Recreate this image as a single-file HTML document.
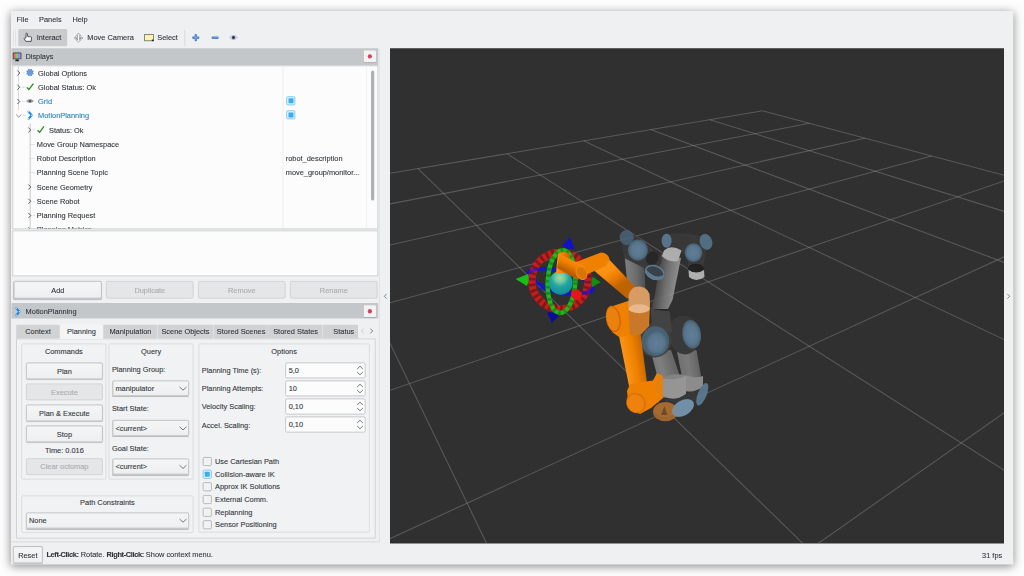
<!DOCTYPE html>
<html><head><meta charset="utf-8"><title>RViz</title>
<style>
html,body{margin:0;padding:0;}
html{width:1024PX;height:576PX;overflow:hidden;}
body{width:1024PX;height:576PX;overflow:hidden;background:#fdfdfd;font-family:"Liberation Sans",sans-serif;font-size:29.6px;color:#31363b;position:relative;}
.a{position:absolute;}
.win{left:44px;top:44px;width:4009.2px;height:2214.4px;background:#eff0f1;box-shadow:0 6px 36px 4px rgba(0,0,0,.45);}
.t,.row,.lab,.btn,.tab,.combo,.spin{-webkit-text-stroke:0.4px currentColor;}
.t{position:absolute;white-space:nowrap;line-height:40px;height:40px;}
.title{background:#c4c7ca;}
.btn{position:absolute;box-sizing:border-box;border:3.2px solid #b4b6b8;border-radius:6.4px;background:linear-gradient(#f4f5f5,#eeeff0);box-shadow:0 2.4px 3.2px rgba(0,0,0,.22);text-align:center;white-space:nowrap;}
.btn.dis{background:#e5e6e7;color:#a9acae;box-shadow:none;border-color:#c9cbcd;}
.frame{position:absolute;box-sizing:border-box;border:3.2px solid #c0c2c4;background:#fcfcfc;}
.grp{position:absolute;box-sizing:border-box;border:3.2px solid #d4d6d7;border-radius:6px;background:#f1f2f3;}
.cb{position:absolute;box-sizing:border-box;width:36px;height:36px;border:3.2px solid #a4a7a9;border-radius:6px;background:#f1f2f3;}
.cb.on{border:3.2px solid #6cc0ee;background:#dff0fb;}
.cb.on::after{content:"";position:absolute;left:5.2px;top:5.2px;width:20px;height:20px;background:#3daee9;border-radius:1.6px;}
.blue{color:#2980b9;}
.row{position:absolute;left:0;height:57px;line-height:57px;white-space:nowrap;}
svg{position:absolute;overflow:visible;}
.tab{position:absolute;box-sizing:border-box;top:1297.6px;height:56px;line-height:54.4px;background:#d0d2d4;border:2.8px solid #c0c2c4;border-bottom:none;text-align:center;white-space:nowrap;border-radius:6px 6px 0 0;}
.tab.act{top:1293.6px;height:62.4px;line-height:60.8px;background:#f3f4f4;z-index:2;}
.lab{position:absolute;white-space:nowrap;line-height:40px;}
.combo{position:absolute;box-sizing:border-box;border:3.2px solid #b4b6b8;border-radius:6.4px;background:linear-gradient(#f4f5f5,#eeeff0);box-shadow:0 2.4px 3.2px rgba(0,0,0,.22);white-space:nowrap;padding-left:8.8px;}
.spin{position:absolute;box-sizing:border-box;border:3.2px solid #b8babc;border-radius:6.4px;background:#fcfcfc;white-space:nowrap;padding-left:10.4px;}
b{letter-spacing:-1.44px;}
#s{position:absolute;left:0;top:0;width:4096PX;height:2304PX;transform:scale(0.25);transform-origin:0 0;}
</style></head><body><div id="s">
<div class="a win"></div>

<!-- menu bar -->
<div class="t" style="left:66.4px;top:58px;">File</div>
<div class="t" style="left:156px;top:58px;">Panels</div>
<div class="t" style="left:289.6px;top:58px;">Help</div>

<!-- toolbar -->
<div class="a" style="left:53.6px;top:118px;width:2.4px;height:66px;background:#d2d4d6;"></div>
<div class="a" style="left:61.6px;top:118px;width:2.4px;height:66px;background:#d2d4d6;"></div>
<div class="a" style="left:73.2px;top:116px;width:196px;height:69.2px;background:#c9cbcd;border-radius:6.4px;"></div>
<svg style="left:91.2px;top:128.8px;" width="42.4" height="42.4" viewBox="0 0 10 10"><path d="M3.1 5.2V1.5c0-.9 1.3-.9 1.3 0v2.3l3 .5c.7.1 1 .5.9 1.1L8 8.6H2.9L1.4 6.3c-.4-.7.4-1.2.9-.7z" fill="#fcfcfc" stroke="#2c3136" stroke-width=".75" stroke-linejoin="round"/></svg>
<div class="t" style="left:146.8px;top:130.8px;">Interact</div>
<svg style="left:294px;top:130px;" width="40" height="40" viewBox="0 0 10 10"><g fill="#f6f6f6" stroke="#54585d" stroke-width=".6" stroke-dasharray="1.1 .35"><path d="M5 .5L7.200 3H6v2.200h1.500V4.200L9.500 5.500 7.500 6.800V6H6v1.500h1.200L5 9.600 2.800 7.500H4V6H2.500v.8L.5 5.500 2.500 4.200v1H4V3H2.800z"/></g></svg>
<div class="t" style="left:349.2px;top:130.8px;">Move Camera</div>
<svg style="left:577.2px;top:136px;" width="40" height="32" viewBox="0 0 10 8"><rect x=".4" y=".4" width="8.8" height="6.4" fill="#fdf6a8" stroke="#555a5e" stroke-width=".7"/><rect x="7.6" y="5.6" width="1.8" height="1.6" fill="#222"/></svg>
<div class="t" style="left:629.2px;top:130.8px;">Select</div>
<div class="a" style="left:738.4px;top:120px;width:2.4px;height:64px;background:#cfd1d3;"></div>
<svg style="left:769.2px;top:136.8px;" width="28" height="28" viewBox="0 0 7 7"><path d="M3.5 1v5M1 3.500h5" stroke="#3f78c4" stroke-width="2.300" fill="none" stroke-linecap="round"/><path d="M3.5 1.300v4.400M1.300 3.500h4.400" stroke="#8fb4e4" stroke-width=".8" fill="none" stroke-linecap="round"/></svg>
<svg style="left:845.6px;top:144.8px;" width="28" height="12" viewBox="0 0 7 3"><path d="M1.200 1.500h4.800" stroke="#3f78c4" stroke-width="2.300" fill="none" stroke-linecap="round"/><path d="M1.400 1.500h4.400" stroke="#8fb4e4" stroke-width=".8" fill="none" stroke-linecap="round"/></svg>
<svg style="left:918.4px;top:138px;" width="32" height="24" viewBox="0 0 8 6"><path d="M.3 3C2 .4 6 .4 7.700 3 6 5.600 2 5.600 .3 3z" fill="#e4e5e7" stroke="#9a9da0" stroke-width=".6"/><circle cx="4" cy="3" r="1.700" fill="#3a4a90"/><circle cx="4" cy="3" r=".7" fill="#141c40"/></svg>

<!-- Displays dock -->
<div class="a title" style="left:45.6px;top:192.8px;width:1467.2px;height:68.8px;"></div>
<svg style="left:50.4px;top:208.8px;" width="36" height="36" viewBox="0 0 9 9"><rect x=".3" y=".3" width="8.600" height="6.800" rx=".7" fill="#3c3c3c" /><rect x="1.100" y="1.100" width="2.400" height="5.200" fill="#dc7474"/><rect x="3.400" y="1.100" width="2.400" height="5.200" fill="#78c878"/><rect x="5.700" y="1.100" width="2.400" height="5.200" fill="#9a96e6"/><path d="M3.400 7.100h2.400l.9 1.900h-4.200z" fill="#2a2a2a"/></svg>
<div class="t" style="left:101.6px;top:206.4px;">Displays</div>
<div class="a" style="left:1455.2px;top:201.6px;width:48.8px;height:47.2px;background:#f2f3f3;border-radius:4px;box-shadow:0 2px 2.4px rgba(0,0,0,.25);"></div>
<div class="a" style="left:1470.8px;top:216.8px;width:17.6px;height:17.6px;border-radius:50%;background:#e0405e;"></div>

<div class="frame" style="left:50.4px;top:261.6px;width:1462.4px;height:655.2px;overflow:hidden;" id="tree">
  <!-- branch lines -->
  <div class="a" style="left:18.4px;top:0;width:2.4px;height:176px;background:#b8babc;"></div>
  <div class="a" style="left:66px;top:229.6px;width:2.4px;height:440px;background:#b8babc;"></div>
  <!-- column / scrollbar -->
  <div class="a" style="left:1077.6px;top:0;width:2.4px;height:680px;background:#dcdddf;"></div>
  <div class="a" style="left:1410.4px;top:0;width:2.4px;height:680px;background:#e6e7e8;"></div>
  <div class="a" style="left:1430.8px;top:17.6px;width:13.2px;height:520px;background:#aeb1b3;border-radius:6.8px;"></div>
  <div class="a" style="left:33.2px;top:26px;width:12px;height:2.4px;background:#c9cbcd;"></div><svg style="left:12.8px;top:15.2px;" width="16" height="24" viewBox="0 0 4 6"><path d="M.9.5L3.300 3 .9 5.500" fill="none" stroke="#3a3f44" stroke-width=".8"/></svg><svg style="left:48.4px;top:7.2px;" width="36" height="36" viewBox="-4.5 -4.5 9 9"><circle r="3" fill="#5a8cd8"/><g stroke="#5a8cd8" stroke-width="1.300"><line x1="0" y1="0" x2="3.42" y2="1.42"/><line x1="0" y1="0" x2="1.42" y2="3.42"/><line x1="0" y1="0" x2="-1.42" y2="3.42"/><line x1="0" y1="0" x2="-3.42" y2="1.42"/><line x1="0" y1="0" x2="-3.42" y2="-1.42"/><line x1="0" y1="0" x2="-1.42" y2="-3.42"/><line x1="0" y1="0" x2="1.42" y2="-3.42"/><line x1="0" y1="0" x2="3.42" y2="-1.42"/></g><circle r="2" fill="none" stroke="#8fb2e8" stroke-width=".6"/><circle r=".8" fill="#7ea6e4"/></svg><div class="row " style="left:98.8px;top:-1.32px;">Global Options</div>
<div class="a" style="left:33.2px;top:82.8px;width:12px;height:2.4px;background:#c9cbcd;"></div><svg style="left:12.8px;top:72px;" width="16" height="24" viewBox="0 0 4 6"><path d="M.9.5L3.300 3 .9 5.500" fill="none" stroke="#3a3f44" stroke-width=".8"/></svg><svg style="left:50.4px;top:66px;" width="32" height="32" viewBox="0 0 8 8"><path d="M.8 4.600L2.900 6.800 7.300 .9" fill="none" stroke="#1f8a1f" stroke-width="1.25"/></svg><div class="row " style="left:98.8px;top:55.68px;">Global Status: Ok</div>
<div class="a" style="left:33.2px;top:140px;width:12px;height:2.4px;background:#c9cbcd;"></div><svg style="left:12.8px;top:129.2px;" width="16" height="24" viewBox="0 0 4 6"><path d="M.9.5L3.300 3 .9 5.500" fill="none" stroke="#3a3f44" stroke-width=".8"/></svg><svg style="left:50.4px;top:127.2px;" width="32" height="24" viewBox="0 0 8 6"><path d="M.2 3C2 .5 6 .5 7.800 3 6 5.500 2 5.500 .2 3z" fill="#9a9da0"/><circle cx="4" cy="3" r="1.200" fill="#55585b"/></svg><div class="row blue" style="left:98.8px;top:112.68px;">Grid</div><div class="cb on" style="left:1092px;top:120px;"></div>
<div class="a" style="left:37.2px;top:196.8px;width:10px;height:2.4px;background:#c9cbcd;"></div><svg style="left:9.6px;top:190px;" width="24" height="16" viewBox="0 0 6 4"><path d="M.5.9L3 3.300 5.500 .9" fill="none" stroke="#4d5257" stroke-width=".65"/></svg><svg style="left:53.6px;top:176px;" width="28" height="40" viewBox="0 0 7 10"><path d="M1.800 1.500L5 5 1.800 8.500" fill="none" stroke="#1e8ae6" stroke-width="2" stroke-linecap="round" stroke-linejoin="round"/><circle cx="1.800" cy="1.500" r=".75" fill="#cfe8fc"/><circle cx="5" cy="5" r=".75" fill="#cfe8fc"/><circle cx="1.800" cy="8.500" r=".75" fill="#cfe8fc"/></svg><div class="row blue" style="left:98.8px;top:169.68px;">MotionPlanning</div><div class="cb on" style="left:1092px;top:176.8px;"></div>
<div class="a" style="left:77.2px;top:254px;width:10px;height:2.4px;background:#c9cbcd;"></div><svg style="left:56.4px;top:243.2px;" width="16" height="24" viewBox="0 0 4 6"><path d="M.9.5L3.300 3 .9 5.500" fill="none" stroke="#3a3f44" stroke-width=".8"/></svg><svg style="left:93.2px;top:237.2px;" width="32" height="32" viewBox="0 0 8 8"><path d="M.8 4.600L2.900 6.800 7.300 .9" fill="none" stroke="#1f8a1f" stroke-width="1.25"/></svg><div class="row " style="left:142.4px;top:226.72px;">Status: Ok</div>
<div class="a" style="left:64.8px;top:311.2px;width:20.4px;height:2.4px;background:#c9cbcd;"></div><div class="row " style="left:94px;top:283.72px;">Move Group Namespace</div>
<div class="a" style="left:64.8px;top:368px;width:20.4px;height:2.4px;background:#c9cbcd;"></div><div class="row " style="left:94px;top:340.72px;">Robot Description</div><div class="row " style="left:1089.6px;top:340.72px;">robot_description</div>
<div class="a" style="left:64.8px;top:425.2px;width:20.4px;height:2.4px;background:#c9cbcd;"></div><div class="row " style="left:94px;top:397.72px;">Planning Scene Topic</div><div class="row " style="left:1089.6px;top:397.72px;">move_group/monitor...</div>
<div class="a" style="left:77.2px;top:482px;width:10px;height:2.4px;background:#c9cbcd;"></div><svg style="left:56.4px;top:471.2px;" width="16" height="24" viewBox="0 0 4 6"><path d="M.9.5L3.300 3 .9 5.500" fill="none" stroke="#3a3f44" stroke-width=".8"/></svg><div class="row " style="left:94px;top:454.72px;">Scene Geometry</div>
<div class="a" style="left:77.2px;top:539.2px;width:10px;height:2.4px;background:#c9cbcd;"></div><svg style="left:56.4px;top:528.4px;" width="16" height="24" viewBox="0 0 4 6"><path d="M.9.5L3.300 3 .9 5.500" fill="none" stroke="#3a3f44" stroke-width=".8"/></svg><div class="row " style="left:94px;top:511.72px;">Scene Robot</div>
<div class="a" style="left:77.2px;top:596px;width:10px;height:2.4px;background:#c9cbcd;"></div><svg style="left:56.4px;top:585.2px;" width="16" height="24" viewBox="0 0 4 6"><path d="M.9.5L3.300 3 .9 5.500" fill="none" stroke="#3a3f44" stroke-width=".8"/></svg><div class="row " style="left:94px;top:568.72px;">Planning Request</div>
<div class="a" style="left:77.2px;top:652.8px;width:10px;height:2.4px;background:#c9cbcd;"></div><svg style="left:56.4px;top:642.4px;" width="16" height="24" viewBox="0 0 4 6"><path d="M.9.5L3.300 3 .9 5.500" fill="none" stroke="#3a3f44" stroke-width=".8"/></svg><div class="row " style="left:94px;top:625.72px;">Planning Metrics</div>
</div>
<div class="frame" style="left:50.4px;top:921.6px;width:1462.4px;height:183.2px;"></div>

<div class="btn" style="left:55.2px;top:1124px;width:352px;height:70.4px;line-height:70.4px;">Add</div>
<div class="btn dis" style="left:424px;top:1124px;width:350.4px;height:70.4px;line-height:70.4px;">Duplicate</div>
<div class="btn dis" style="left:792px;top:1124px;width:350.4px;height:70.4px;line-height:70.4px;">Remove</div>
<div class="btn dis" style="left:1160px;top:1124px;width:350.4px;height:70.4px;line-height:70.4px;">Rename</div>

<!-- MotionPlanning dock -->
<div class="a title" style="left:45.6px;top:1211.6px;width:1467.2px;height:62.4px;"></div>
<svg style="left:58.4px;top:1227.2px;" width="28" height="40" viewBox="0 0 7 10"><path d="M1.800 1.500L5 5 1.800 8.500" fill="none" stroke="#1e8ae6" stroke-width="2" stroke-linecap="round" stroke-linejoin="round"/><circle cx="1.800" cy="1.500" r=".75" fill="#cfe8fc"/><circle cx="5" cy="5" r=".75" fill="#cfe8fc"/><circle cx="1.800" cy="8.500" r=".75" fill="#cfe8fc"/></svg>
<div class="t" style="left:102.4px;top:1224px;">MotionPlanning</div>
<div class="a" style="left:1455.2px;top:1220.8px;width:48.8px;height:47.2px;background:#f2f3f3;border-radius:4px;box-shadow:0 2px 2.4px rgba(0,0,0,.25);"></div>
<div class="a" style="left:1470.8px;top:1236px;width:17.6px;height:17.6px;border-radius:50%;background:#e0405e;"></div>

<!-- tabs -->
<div class="tab" style="left:64.8px;width:174.4px;">Context</div>
<div class="tab act" style="left:238.4px;width:175.2px;">Planning</div>
<div class="tab" style="left:412.8px;width:217.6px;">Manipulation</div>
<div class="tab" style="left:629.6px;width:224.8px;">Scene Objects</div>
<div class="tab" style="left:853.6px;width:221.6px;">Stored Scenes</div>
<div class="tab" style="left:1074.4px;width:216px;">Stored States</div>
<div class="tab" style="left:1289.6px;width:143.2px;padding-left:28px;">Status</div>
<svg style="left:1442.4px;top:1312px;" width="16" height="24" viewBox="0 0 4 6"><path d="M3.2.6L.8 3l2.400 2.400" fill="none" stroke="#b4b7b9" stroke-width=".7"/></svg>
<svg style="left:1477.6px;top:1312px;" width="16" height="24" viewBox="0 0 4 6"><path d="M.8.6L3.200 3 .8 5.400" fill="none" stroke="#4a4f54" stroke-width=".7"/></svg>
<div class="a" style="left:64.8px;top:1353.6px;width:1437.6px;height:800px;box-sizing:border-box;border:3.2px solid #c6c8ca;background:#f1f2f3;"></div>

<!-- Commands -->
<div class="grp" style="left:85.2px;top:1374.4px;width:340px;height:543.2px;"></div>
<div class="lab" style="left:85.2px;width:340px;top:1384.4px;text-align:center;">Commands</div>
<div class="btn" style="left:104px;top:1449.6px;width:307.2px;height:67.2px;line-height:62.8px;">Plan</div>
<div class="btn dis" style="left:104px;top:1533.6px;width:307.2px;height:67.2px;line-height:62.8px;">Execute</div>
<div class="btn" style="left:104px;top:1617.6px;width:307.2px;height:67.2px;line-height:62.8px;">Plan &amp; Execute</div>
<div class="btn" style="left:104px;top:1701.6px;width:307.2px;height:67.2px;line-height:62.8px;">Stop</div>
<div class="lab" style="left:104px;width:307.2px;top:1780.8px;text-align:center;">Time: 0.016</div>
<div class="btn dis" style="left:104px;top:1832.8px;width:307.2px;height:67.2px;line-height:62.8px;">Clear octomap</div>

<!-- Query -->
<div class="grp" style="left:434.4px;top:1374.4px;width:340px;height:543.2px;"></div>
<div class="lab" style="left:434.4px;width:340px;top:1384.4px;text-align:center;">Query</div>
<div class="lab" style="left:447.6px;top:1459.2px;">Planning Group:</div>
<div class="combo" style="left:450px;top:1522.4px;width:306.4px;height:61.2px;line-height:58.4px;">manipulator</div>
<div class="lab" style="left:447.6px;top:1615.2px;">Start State:</div>
<div class="combo" style="left:450px;top:1680px;width:306.4px;height:63.6px;line-height:60.8px;">&lt;current&gt;</div>
<div class="lab" style="left:447.6px;top:1772.8px;">Goal State:</div>
<div class="combo" style="left:450px;top:1834.4px;width:306.4px;height:63.6px;line-height:60.8px;">&lt;current&gt;</div>

<!-- Path Constraints -->
<div class="grp" style="left:85.2px;top:1981.6px;width:689.2px;height:150.4px;"></div>
<div class="lab" style="left:85.2px;width:689.2px;top:1990.8px;text-align:center;">Path Constraints</div>
<div class="combo" style="left:104px;top:2050.4px;width:652px;height:63.2px;line-height:59.2px;">None</div>

<!-- Options -->
<div class="grp" style="left:793.6px;top:1374.4px;width:685.6px;height:756px;"></div>
<div class="lab" style="left:793.6px;width:685.6px;top:1386.4px;text-align:center;">Options</div>
<div class="lab" style="left:806.8px;top:1463.2px;">Planning Time (s):</div>
<div class="lab" style="left:806.8px;top:1535.2px;">Planning Attempts:</div>
<div class="lab" style="left:806.8px;top:1607.2px;">Velocity Scaling:</div>
<div class="lab" style="left:806.8px;top:1679.6px;">Accel. Scaling:</div>
<div class="spin" style="left:1141.2px;top:1450px;width:320.8px;height:63.2px;line-height:59.2px;">5,0</div>
<div class="spin" style="left:1141.2px;top:1522px;width:320.8px;height:63.2px;line-height:59.2px;">10</div>
<div class="spin" style="left:1141.2px;top:1594.4px;width:320.8px;height:63.2px;line-height:59.2px;">0,10</div>
<div class="spin" style="left:1141.2px;top:1666.4px;width:320.8px;height:63.2px;line-height:59.2px;">0,10</div>
<svg style="left:1425.6px;top:1459.6px;" width="28" height="44" viewBox="0 0 7 11"><path d="M.6 4L3.500 1.200 6.400 4M.6 7L3.500 9.800 6.400 7" fill="none" stroke="#3f4449" stroke-width=".7"/></svg>
<svg style="left:1425.6px;top:1531.6px;" width="28" height="44" viewBox="0 0 7 11"><path d="M.6 4L3.500 1.200 6.400 4M.6 7L3.500 9.800 6.400 7" fill="none" stroke="#3f4449" stroke-width=".7"/></svg>
<svg style="left:1425.6px;top:1604px;" width="28" height="44" viewBox="0 0 7 11"><path d="M.6 4L3.500 1.200 6.400 4M.6 7L3.500 9.800 6.400 7" fill="none" stroke="#3f4449" stroke-width=".7"/></svg>
<svg style="left:1425.6px;top:1676px;" width="28" height="44" viewBox="0 0 7 11"><path d="M.6 4L3.500 1.200 6.400 4M.6 7L3.500 9.800 6.400 7" fill="none" stroke="#3f4449" stroke-width=".7"/></svg>
<svg style="left:716px;top:1544px;" width="32" height="20" viewBox="0 0 8 5"><path d="M.6 1L4 4.200 7.400 1" fill="none" stroke="#3f4449" stroke-width=".7"/></svg>
<svg style="left:716px;top:1702.8px;" width="32" height="20" viewBox="0 0 8 5"><path d="M.6 1L4 4.200 7.400 1" fill="none" stroke="#3f4449" stroke-width=".7"/></svg>
<svg style="left:716px;top:1857.2px;" width="32" height="20" viewBox="0 0 8 5"><path d="M.6 1L4 4.200 7.400 1" fill="none" stroke="#3f4449" stroke-width=".7"/></svg>
<svg style="left:716px;top:2072px;" width="32" height="20" viewBox="0 0 8 5"><path d="M.6 1L4 4.200 7.400 1" fill="none" stroke="#3f4449" stroke-width=".7"/></svg>
<div class="cb" style="left:810.8px;top:1828.4px;"></div><div class="lab" style="left:860px;top:1826.8px;">Use Cartesian Path</div>
<div class="cb on" style="left:810.8px;top:1879.2px;"></div><div class="lab" style="left:860px;top:1876.8px;">Collision-aware IK</div>
<div class="cb" style="left:810.8px;top:1929.2px;"></div><div class="lab" style="left:860px;top:1925.6px;">Approx IK Solutions</div>
<div class="cb" style="left:810.8px;top:1980px;"></div><div class="lab" style="left:860px;top:1978.4px;">External Comm.</div>
<div class="cb" style="left:810.8px;top:2030.8px;"></div><div class="lab" style="left:860px;top:2029.2px;">Replanning</div>
<div class="cb" style="left:810.8px;top:2080.8px;"></div><div class="lab" style="left:860px;top:2079.2px;">Sensor Positioning</div>

<div class="a" style="left:45.6px;top:2166.4px;width:1472px;height:2.4px;background:#cdcfd1;"></div>
<div class="a" style="left:1516px;top:194.4px;width:2.4px;height:1974.4px;background:#d5d7d9;"></div>

<!-- splitter arrows -->
<svg style="left:1533.6px;top:1172.8px;" width="16" height="24" viewBox="0 0 4 6"><path d="M3.2.6L.8 3l2.400 2.400" fill="none" stroke="#55595e" stroke-width=".7"/></svg>
<svg style="left:4025.6px;top:1172.8px;" width="16" height="24" viewBox="0 0 4 6"><path d="M.8.6L3.200 3 .8 5.400" fill="none" stroke="#55595e" stroke-width=".7"/></svg>

<!-- status bar -->
<div class="btn" style="left:51.6px;top:2184.8px;width:119.2px;height:68px;line-height:64px;">Reset</div>
<div class="t" style="left:185.6px;top:2198px;"><b>Left-Click:</b> Rotate. <b>Right-Click:</b> Show context menu.</div>
<div class="t" style="left:3800px;width:208.8px;text-align:right;top:2200px;">31 fps</div>

<!-- 3D view -->
<div class="a" style="left:1560px;top:193.2px;width:2456px;height:1980.4px;background:#303030;overflow:hidden;">
<svg style="left:0;top:0;" width="2456" height="1980.4" viewBox="0 0 614 495.1">
<g stroke="#a0a0a4" stroke-opacity=".37" stroke-width="1.05" fill="none">
<line x1="372.3" y1="62.6" x2="-5.0" y2="125.9"/>
<line x1="372.3" y1="62.6" x2="619.0" y2="128.4"/>
<line x1="419.2" y1="75.1" x2="-5.0" y2="156.6"/>
<line x1="319.8" y1="71.4" x2="619.0" y2="164.7"/>
<line x1="474.7" y1="89.9" x2="-5.0" y2="197.8"/>
<line x1="260.7" y1="81.3" x2="619.0" y2="216.0"/>
<line x1="541.6" y1="107.7" x2="-5.0" y2="255.8"/>
<line x1="193.6" y1="92.6" x2="619.0" y2="293.6"/>
<line x1="619.0" y1="131.1" x2="-5.0" y2="343.7"/>
<line x1="116.8" y1="105.4" x2="619.0" y2="425.1"/>
<line x1="619.0" y1="206.3" x2="-5.0" y2="492.6"/>
<line x1="28.0" y1="120.3" x2="417.9" y2="500.1"/>
<line x1="619.0" y1="361.2" x2="421.2" y2="500.1"/>
<line x1="-5.0" y1="284.6" x2="98.9" y2="500.1"/>
</g>
<defs>
<linearGradient id="og" gradientUnits="userSpaceOnUse" x1="609" y1="270" x2="620" y2="286"><stop offset="0" stop-color="#fb9214"/><stop offset=".4" stop-color="#f08000"/><stop offset="1" stop-color="#bf6200"/></linearGradient>
<linearGradient id="ogv" gradientUnits="userSpaceOnUse" x1="624" y1="360" x2="645" y2="356"><stop offset="0" stop-color="#fb9416"/><stop offset=".5" stop-color="#f08000"/><stop offset="1" stop-color="#c46500"/></linearGradient>
<linearGradient id="ogw" gradientUnits="userSpaceOnUse" x1="556" y1="260" x2="570" y2="260"><stop offset="0" stop-color="#fb9416"/><stop offset=".5" stop-color="#f08000"/><stop offset="1" stop-color="#c46500"/></linearGradient>
<linearGradient id="ogh" gradientUnits="userSpaceOnUse" x1="575" y1="258" x2="568" y2="272"><stop offset="0" stop-color="#fb9416"/><stop offset=".5" stop-color="#f08000"/><stop offset="1" stop-color="#b85e00"/></linearGradient>
<linearGradient id="gtA" gradientUnits="userSpaceOnUse" x1="625" y1="275" x2="645" y2="275"><stop offset="0" stop-color="#8d8d8d"/><stop offset=".5" stop-color="#7a7a7a"/><stop offset="1" stop-color="#565656"/></linearGradient>
<linearGradient id="gtB" gradientUnits="userSpaceOnUse" x1="657" y1="275" x2="677" y2="278"><stop offset="0" stop-color="#4a4a4a"/><stop offset=".5" stop-color="#7a7a7a"/><stop offset="1" stop-color="#9c9c9c"/></linearGradient>
<linearGradient id="gtC" gradientUnits="userSpaceOnUse" x1="652" y1="375" x2="674" y2="368"><stop offset="0" stop-color="#808080"/><stop offset=".5" stop-color="#8c8c8c"/><stop offset="1" stop-color="#727272"/></linearGradient>
<linearGradient id="gtD" gradientUnits="userSpaceOnUse" x1="678" y1="372" x2="700" y2="368"><stop offset="0" stop-color="#787878"/><stop offset=".5" stop-color="#868686"/><stop offset="1" stop-color="#6c6c6c"/></linearGradient>
<radialGradient id="sph" cx=".47" cy=".28" r=".75"><stop offset="0" stop-color="#a6dc9a"/><stop offset=".28" stop-color="#6cc6a0"/><stop offset=".5" stop-color="#22a4a4"/><stop offset="1" stop-color="#0d8a94"/></radialGradient>
<radialGradient id="bc" cx=".5" cy=".5" r=".5"><stop offset="0" stop-color="#6a8ca8"/><stop offset=".7" stop-color="#5f819c"/><stop offset="1" stop-color="#4a667c"/></radialGradient>
</defs>
<g transform="translate(-390,-48.3)">
<!-- ===== grey transparent robots ===== -->
<g opacity=".86">
 <!-- lower tubes -->
 <path d="M651 352 L671 350 L685.500 393 L663 398z" fill="url(#gtC)"/>
 <path d="M677 352 L696.500 350 L703 388 L685 392z" fill="url(#gtD)"/>
 <path d="M662.300 378 Q674 381 686 375.500 L686 394 Q674 403 662.300 395.500z" fill="#a6a6a6"/>
 <path d="M662.300 378 Q674 381 686 375.500 Q674 372 662.300 378z" fill="#929292"/>
 <path d="M686 375 Q695 379 703 376 L703 387 Q694 394 686 390.500z" fill="#9c9c9c"/>
 <!-- shoulder dark body -->
 <ellipse cx="684" cy="335" rx="15.500" ry="19.500" fill="#3b3b3b" transform="rotate(-8 684 335)"/>
 <ellipse cx="655" cy="340" rx="16.500" ry="17.500" fill="#434343"/>
 <path d="M650.500 308 Q660 312 669.500 310.500 L672 332 L653 334z" fill="#474747"/>
 <path d="M650.500 308 Q660 312 669.500 310.500 L669.300 307 Q660 309 650.800 305z" fill="#2a2a2a"/>
 <ellipse cx="655.400" cy="341.300" rx="13.700" ry="15" fill="#4f6a80"/>
 <ellipse cx="656.500" cy="343" rx="11.500" ry="12.500" fill="url(#bc)"/>
 <ellipse cx="691.600" cy="334.400" rx="9.400" ry="14.400" fill="url(#bc)" transform="rotate(-8 691.6 334.4)"/>
 <!-- base caps -->
 <path d="M664 398 Q676 402 686 394 L702 388 L700 398 L690 408 L668 408z" fill="#393939"/>
 <ellipse cx="682.900" cy="408" rx="11.900" ry="7.500" fill="#6788a2" transform="rotate(-30 682.9 408)"/>
 <ellipse cx="702.300" cy="394.300" rx="4.400" ry="11.900" fill="#5f819c" transform="rotate(22 702.3 394.3)"/>
 <!-- upper tubes (V) -->
 <path d="M624.500 255 L644 257 L646 306 L629 300z" fill="url(#gtA)"/>
 <path d="M661 254 L681 258 L672.500 300 L668 309 L651 309 L655 294z" fill="url(#gtB)"/>
 <!-- A joint dark -->
 <path d="M621 236 Q632 230 642 240 L662 258 Q660 272 648 270 L624 258z" fill="#3c3c3c"/>
 <ellipse cx="652.300" cy="258.300" rx="6" ry="7" fill="#262626" transform="rotate(30 652.3 258.3)"/>
 <ellipse cx="626.600" cy="237.600" rx="7" ry="7.500" fill="#4b6378"/>
 <ellipse cx="637.900" cy="250.100" rx="10" ry="10.600" fill="url(#bc)"/>
 <ellipse cx="654.800" cy="272.600" rx="9.500" ry="6.500" fill="#394650" stroke="#6485a0" stroke-width="1.600" transform="rotate(22 654.8 272.6)"/>
 <path d="M646 271 Q652 284 663 276 Q656 281 646 271z" fill="#6485a0" stroke="#6485a0" stroke-width="2"/>
 <!-- B right top assembly -->
 <path d="M668 234 Q684 232 701 236 Q709 246 704 262 L704 272 L688 272 L688 258 Q682 250 668 249z" fill="#3b3b3b"/>
 <ellipse cx="666.600" cy="240.800" rx="5" ry="7" fill="#5f819c"/>
 <ellipse cx="706" cy="242" rx="6.200" ry="8.100" fill="#587890" transform="rotate(-20 706 242)"/>
 <ellipse cx="693.500" cy="252.600" rx="8.800" ry="9.400" fill="url(#bc)"/>
 <path d="M664 250.500 Q671 244 681.500 250.500 L678 261 Q668 263 662 256z" fill="#c2c2c2"/>
 <ellipse cx="696" cy="268.300" rx="8.100" ry="4.400" fill="#1f1f1f"/>
 <path d="M688.500 270 Q696 275 704 270 L704.500 277 Q696 283 689 277z" fill="#c4c4c4"/>
</g>
<!-- orange base (translucent) -->
<ellipse cx="665.400" cy="411.800" rx="12.500" ry="9.400" fill="#9c642e"/>
<ellipse cx="665.400" cy="409.800" rx="11" ry="7.400" fill="#a56a30"/>
<path d="M664.500 406 l3 9 h-6.500z" fill="#6e4c2a"/>
<ellipse cx="682.900" cy="408" rx="11.900" ry="7.500" fill="#7595ae" opacity=".8" transform="rotate(-30 682.9 408)"/>
<!-- ===== orange arm ===== -->
<g>
 <!-- upper arm -->
 <path d="M619 336 L640.500 333 L647 383 L629 386z" fill="url(#ogv)"/>
 <!-- shoulder cylinder -->
 <path d="M610 307 L631 300 L648 297 L650 303 L649 326 L641 334 L619 337 L612 332z" fill="#f08000"/>
 <path d="M628.500 311 L649 311 L648.500 326 L641 334 L630 335z" fill="#c9782a"/>
 <ellipse cx="613.400" cy="319" rx="7.400" ry="13.400" fill="#d06c04" transform="rotate(-10 613.4 319)"/>
 <ellipse cx="612.900" cy="319" rx="6.200" ry="12" fill="#ec800c" transform="rotate(-10 612.9 319)"/>
 <!-- forearm -->
 <path d="M607 257.300 L594.500 271 L627 298.500 L640 292z" fill="url(#og)"/>
 <!-- elbow (peach) -->
 <path d="M628.500 296 Q630 286 640 286.500 Q650 288 649.800 298 L649.800 308.800 Q639 314 628.500 308.800z" fill="#d69c64"/>
 <ellipse cx="639.100" cy="308.800" rx="10.600" ry="4.400" fill="#e6b88c"/>
 <!-- lower joint -->
 <path d="M627 391 L630 384 L653 380.500 L657 373 L662.500 376 L663 398 L651 408 L640 414 L629 409z" fill="#f08000"/>
 <path d="M657 373 L662.500 376 L663 398 L655 392z" fill="#e88010"/>
 <ellipse cx="636" cy="403" rx="9.600" ry="10.400" fill="#d87206" transform="rotate(-30 636 403)"/>
 <ellipse cx="635.600" cy="403.300" rx="8.400" ry="9.200" fill="#ee820c" transform="rotate(-30 635.6 403.3)"/>
</g>
<!-- ===== interactive marker ===== -->
<g>
 <ellipse cx="560.600" cy="281.300" rx="33" ry="10" fill="none" stroke="#1616cc" stroke-width="3.600" transform="rotate(14 560.6 281.3)" opacity=".92"/>
 <g opacity=".86">
 <circle cx="560" cy="280.700" r="28.200" fill="none" stroke="#dc1c1c" stroke-width="7.400"/>
 <circle cx="560" cy="280.700" r="28.200" fill="none" stroke="#8e1414" stroke-width="7.400" stroke-dasharray="2.700 3.206"/>
 </g>
 <path d="M527 273 Q540 266 556 270.500" fill="none" stroke="#1616cc" stroke-width="3.400" opacity=".55"/>
 <path d="M540 287.500 Q560 296 582 293.500 Q592 291.500 594 288" fill="none" stroke="#1616cc" stroke-width="3.400" opacity=".7"/>
 <g opacity=".9">
 <ellipse cx="561.500" cy="281.600" rx="13.800" ry="31.500" fill="none" stroke="#1cc81c" stroke-width="4.400" transform="rotate(3 561.5 281.6)"/>
 <ellipse cx="561.500" cy="281.600" rx="13.800" ry="31.500" fill="none" stroke="#0c800c" stroke-width="4.400" stroke-dasharray="2.600 3.400" transform="rotate(3 561.5 281.6)" opacity=".65"/>
 </g>
 <circle cx="560.750" cy="282.900" r="11.900" fill="url(#sph)"/>
 <!-- cones -->
 <path d="M570 237.300 L562 245.400 Q567 250.500 574.500 248.500z" fill="#1212c4"/>
 <path d="M551.900 322.900 L546.900 312.900 Q552 311 558.800 316z" fill="#0c0c9a"/>
 <path d="M515.600 279.100 L528.100 274.100 Q530 280 526.900 286z" fill="#16c016"/>
 <path d="M600.600 282.300 L592.500 276.600 Q590.500 282 591.900 287.300z" fill="#0f8f0f"/>
 <path d="M571.500 291 L577.500 289 L582 293 L581 299 L575 300.500 L571 296z" fill="#e41616"/>
</g>
<!-- wrist: vertical, horizontal, wrist2 over marker -->
<path d="M558 254 Q563 250 569.500 254 L570.500 262 L573 273 L556 273 L557 262z" fill="url(#ogw)"/>
<path d="M579.500 277.500 L572 263.500 L601 252.500 Q608 253 609.500 259 L606 266z" fill="#f08000"/>
<path d="M560 254.500 L585.500 266.500 L578 280 L557 268z" fill="url(#ogh)"/>
<ellipse cx="581.400" cy="272.900" rx="5.600" ry="7.500" fill="#f08410" transform="rotate(-28 581.4 272.9)"/>
<ellipse cx="581.700" cy="273.100" rx="4.400" ry="6.200" fill="#d97406" transform="rotate(-28 581.7 273.1)"/>
</g>

</svg>
</div>
</div></body></html>
